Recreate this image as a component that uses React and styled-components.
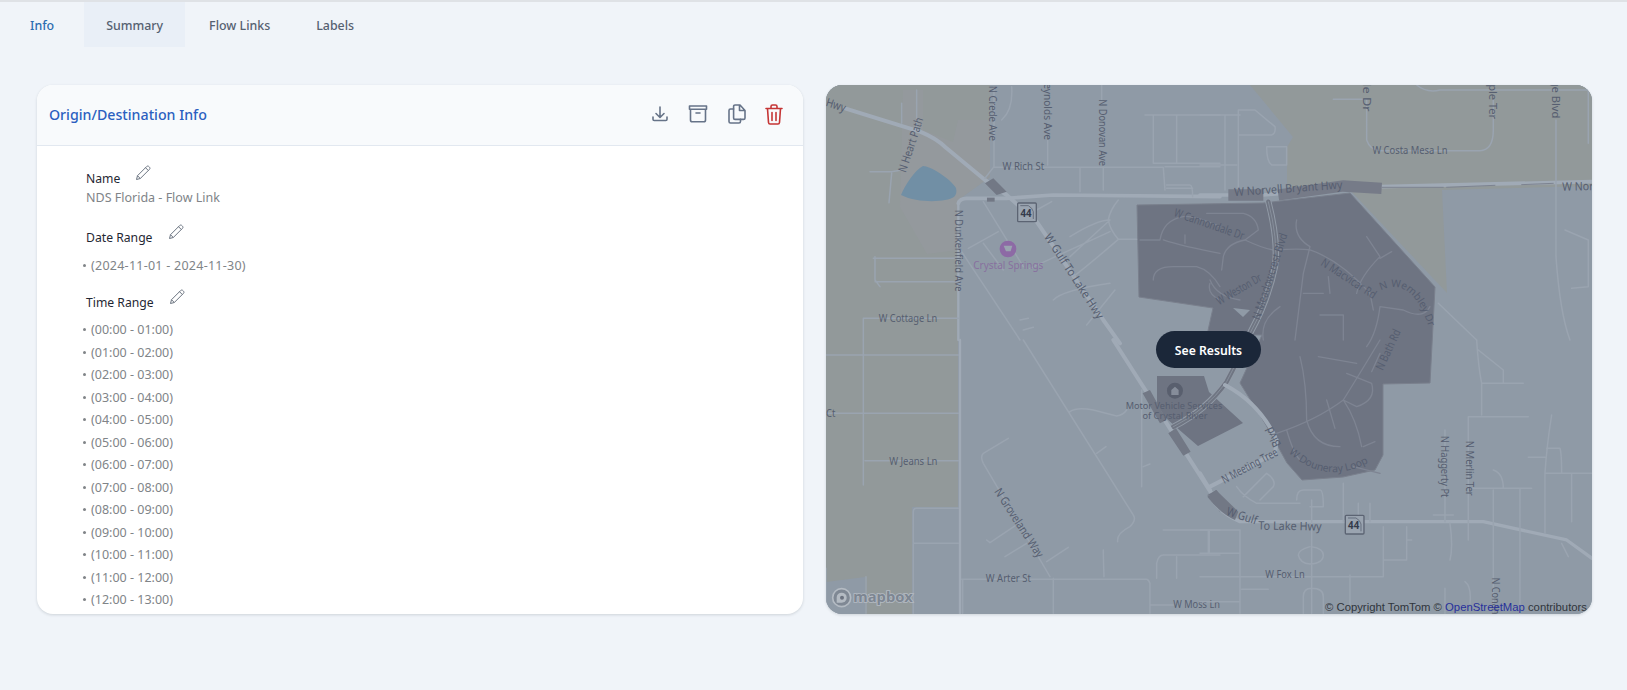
import React from 'react'
import styled, { createGlobalStyle } from 'styled-components'

const GlobalStyle = createGlobalStyle`
    html, body {
        margin: 0;
        height: 100%;
        background: #f0f4f9;
        font-family: "Noto Sans", "Open Sans", sans-serif;
    }
`

const Page = styled.div`
    min-height: 690px;
    border-top: 2px solid #dfe2e6;
    box-sizing: border-box;
`

const TabBar = styled.div`
    display: flex;
    height: 45px;
    padding-left: 8px;
    gap: 2px;
`

const Tab = styled.div`
    display: flex;
    align-items: center;
    padding: 2px 22px 0;
    font-size: 12.4px;
    font-weight: 500;
    color: ${props => props.$active ? '#2b6cb0' : '#566171'};
    background: ${props => props.$hover ? '#e9eff7' : 'transparent'};
    margin-right: ${props => props.$active ? '6px' : '0'};
`

const Columns = styled.div`
    display: grid;
    grid-template-columns: 766px 766px;
    gap: 23px;
    padding: 38px 0 0 37px;
`

const Card = styled.section`
    height: 529px;
    background: white;
    border-radius: 16px;
    box-shadow: 0 1px 3px rgba(30, 41, 59, 0.16);
    overflow: hidden;
`

const CardHeader = styled.header`
    display: flex;
    align-items: center;
    justify-content: space-between;
    height: 61px;
    box-sizing: border-box;
    padding: 0 20px 2px 12px;
    background: #f8fafc;
    border-bottom: 1px solid #e2e8f0;
`

const Title = styled.h2`
    margin: 0;
    font-size: 14.2px;
    font-weight: 500;
    color: #2b5fc0;
`

const Actions = styled.div`
    display: flex;
    align-items: center;
    gap: 19.4px;
`

const IconButton = styled.span`
    display: flex;
    color: ${props => props.$danger ? '#c53535' : '#667388'};
`

const CardBody = styled.div`
    padding: 18px 0 0 49px;
`

const Field = styled.div`
    margin-bottom: ${props => props.$gap || '0'};
`

const FieldLabel = styled.div`
    display: flex;
    align-items: flex-start;
    height: 24px;
    gap: 15px;
    font-size: 12.2px;
    line-height: 30px;
    color: #1f2733;
`

const PencilWrap = styled.span`
    display: flex;
    margin-top: 1px;
    color: #6b7480;
`

const FieldValue = styled.div`
    font-size: 12.5px;
    line-height: 20px;
    color: #808488;
`

const RangeList = styled.ul`
    list-style: none;
    margin: ${props => props.$top} 0 0 -3px;
    padding: 0;
`

const RangeItem = styled.li`
    display: flex;
    align-items: center;
    height: 22.5px;
    gap: 5px;
    font-size: 12.5px;
    letter-spacing: ${props => props.$wide ? '0.25px' : '0'};
    color: #808488;

    &::before {
        content: "";
        width: 3px;
        height: 3px;
        border-radius: 50%;
        background: #808488;
    }
`

const MapCard = styled(Card)`
    position: relative;
    background: #8f9aa6;
`

const MapSvg = styled.svg`
    display: block;
    width: 766px;
    height: 529px;
`

const ResultsButton = styled.button`
    position: absolute;
    left: 330px;
    top: 246px;
    width: 105px;
    height: 37px;
    padding: 2px 0 0;
    border: 0;
    border-radius: 19px;
    background: #1b2739;
    color: white;
    font: 600 12.2px "Noto Sans", sans-serif;
`

const Attribution = styled.div`
    position: absolute;
    right: 5px;
    bottom: 0;
    font: 11.3px/14px "Liberation Sans", Arial, sans-serif;
    color: #30353c;

    a {
        color: #27309b;
        text-decoration: none;
    }
`

const ROAD = '#a0aab6'
const ROAD_THIN = '#9aa4b0'
const ROAD_SITE = '#7e8492'
const LABEL = '#565e70'
const SITE = '#6e7482'

const hours = Array.from({ length: 13 }, (_, i) => {
    const p = n => String(n).padStart(2, '0')
    return `(${p(i)}:00 - ${p(i + 1)}:00)`
})

const DownloadIcon = () => (
    <svg width="18" height="18" viewBox="0 0 18 18" fill="none" stroke="currentColor" strokeWidth="1.6" strokeLinecap="round" strokeLinejoin="round">
        <path d="M9 2v10M5 8.5 9 12.5l4-4M2 12v2.2c0 .7.5 1.3 1.2 1.3h11.6c.7 0 1.2-.6 1.2-1.3V12" />
    </svg>
)

const ArchiveIcon = () => (
    <svg width="20" height="18" viewBox="0 0 20 18" fill="none" stroke="currentColor" strokeWidth="1.6" strokeLinecap="round" strokeLinejoin="round">
        <path d="M1.500 1h17v3.200h-17zM2.500 4.200V15c0 1 .7 1.800 1.700 1.800h11.600c1 0 1.700-.8 1.700-1.800V4.200M8 8h4" />
    </svg>
)

const CopyIcon = () => (
    <svg width="18" height="20" viewBox="0 0 18 20" fill="none" stroke="currentColor" strokeWidth="1.6" strokeLinecap="round" strokeLinejoin="round">
        <path d="M7 1h5l5 5.500V14c0 .8-.6 1.400-1.400 1.400H7c-.8 0-1.400-.6-1.400-1.400V2.400C5.600 1.600 6.200 1 7 1zM11.500 1v5.500H17" />
        <path d="M5.600 5H2.500C1.700 5 1 5.700 1 6.500v11C1 18.300 1.700 19 2.500 19H11c.8 0 1.500-.7 1.500-1.500v-2.100" />
    </svg>
)

const TrashIcon = () => (
    <svg width="18" height="21" viewBox="0 0 18 21" fill="none" stroke="currentColor" strokeWidth="1.6" strokeLinecap="round" strokeLinejoin="round">
        <path d="M1 4.500h16M6 4.500V2.500C6 1.700 6.600 1 7.500 1h3c.9 0 1.500.7 1.500 1.500v2M2.500 4.500l1 14c.1.9.7 1.500 1.500 1.500h8c.8 0 1.400-.6 1.500-1.500l1-14M7 8.500v8M11 8.500v8" />
    </svg>
)

const PencilIcon = () => (
    <svg width="16" height="16" viewBox="0 0 16 16" fill="none" stroke="currentColor" strokeWidth="1" strokeLinejoin="round">
        <path d="M1.500 14.500l1-3.800L11.700 1.500c.6-.6 1.500-.6 2.100 0l.7.700c.6.600.6 1.500 0 2.100L5.300 13.500zM2.500 10.700l2.800 2.800M10.500 2.700l2.800 2.800" />
    </svg>
)

const Label = ({ x, y, rot = 0, len, fill = LABEL, size = 35, children }) => (
    <text
        x={x}
        y={y}
        fontSize={size}
        fontFamily='"Noto Sans", sans-serif'
        fill={fill}
        textAnchor="middle"
        dominantBaseline="middle"
        textLength={len}
        lengthAdjust="spacingAndGlyphs"
        transform={`rotate(${rot} ${x} ${y})`}
    >
        {children}
    </text>
)

const CurvedLabel = ({ id, d, children }) => (
    <>
        <path id={id} d={d} fill="none" />
        <text fontSize="31" fontFamily='"Noto Sans", sans-serif' fill={LABEL}>
            <textPath href={`#${id}`} startOffset="50%" textAnchor="middle">{children}</textPath>
        </text>
    </>
)

// one group per crop of the map, road coordinates are 3x page pixels
const Layer = ({ x, y, children }) => (
    <g transform={`translate(${x} ${y}) scale(0.3333)`}>{children}</g>
)

const Roads = ({ d, width = 4.5, color }) => (
    <path d={d} fill="none" stroke={color || (width > 6 ? ROAD : ROAD_THIN)} strokeWidth={width} strokeLinecap="round" strokeLinejoin="round" />
)

const Shield = ({ x, y }) => (
    <g transform={`translate(${x} ${y})`}>
        <rect x="0" y="0" width="56" height="56" rx="3" fill="#9aa4b0" stroke="#5c6473" strokeWidth="4" />
        <path d="M8 8h24l10 8 5 10v22" fill="none" stroke="#5c6473" strokeWidth="2.500" />
        <text x="25" y="42" fontSize="29" fontWeight="700" textAnchor="middle" fontFamily='"Noto Sans", sans-serif' fill="#343b4b">44</text>
    </g>
)

const MapDrawing = () => (
    <MapSvg viewBox="826 85 766 529">
        <rect x="826" y="85" width="766" height="529" fill="#8f9aa6" />

        {/* land use */}
        <path fill="#92999a" d="M826 85H990V177L958 200V507H912V614H865V577L826 582Z" />
        <path fill="#94999d" d="M903 90H923V130L953 142L958 120H990V177L958 200V250L927 254L900 207Z" />
        <path fill="#92999a" d="M1250 85L1293 137L1287 147V187L1350 190L1447 293L1442 190L1592 186V85Z" />
        <path fill="#718fa5" d="M923 166C930 166 950 178 956 188C958 196 953 199 945 200C935 202 915 202 901 195C905 185 915 170 923 166Z" />

        {/* site outline */}
        <path fill={SITE} stroke="#7a808d" d="M1137 205L1263 203L1350 193L1435 287L1430 383L1383 384L1383 455L1375 470L1343 477L1302 480L1287 463L1266 425L1240 383L1262 335L1207 335L1213 308L1139 297Z" />
        <path fill={SITE} d="M1157 376H1204L1209 392L1243 423L1198 446L1176 427L1157 410Z" />
        <path fill="#8f9aa6" d="M1233 308L1250 310L1243 317Z" />

        <Layer x={820} y={80}>
            <Roads width={12} d="M75 85L300 155Q350 175 380 205L495 300L560 345L650 425L850 720L900 790" />
            <Roads width={11} d="M415 370Q420 355 440 355L560 355L700 345L1200 350" />
            <Roads d="M522 20V260L495 295M575 20Q580 90 545 120M683 180V255M845 15V60M850 260V330M520 262H1030L1035 330M780 262V335M1000 105V250M1070 105V250M975 105H1200M1000 250H1200M1035 260H1200M1040 315H1110Q1118 315 1118 350M1040 325H1118" />
            <Roads width={7} d="M415 365V780" />
            <Roads d="M160 535H415M165 530V600L180 620M165 605H415M130 780V715H415M290 30V150M245 70V130M150 275H215L245 270M215 280L207 368" />
            <Roads d="M490 365L610 560M415 500L600 780M445 505L535 455M490 490L550 570M630 565L870 455M750 530L870 420Q830 420 750 470M895 360Q870 390 865 420Q870 450 895 478L950 478M760 590Q800 560 895 478M700 660Q730 630 870 610M650 390L695 365M800 735L885 630M600 720L625 715M610 750L640 742" />
            <Roads color={ROAD_SITE} width={4} d="M960 480H1020Q1030 420 1090 410Q1120 405 1200 440M1030 480Q1090 500 1200 520M1095 465V490M1000 600Q1000 560 1060 560H1130Q1170 570 1200 620M1170 610Q1160 640 1200 660" />
            <path d="M495 310L520 295L560 335L530 345Z" fill="#727885" />
            <rect x="501" y="353" width="23" height="12" fill="#727885" />
            <Label x={47} y={78} rot={18} len={60}>Hwy</Label>
            <Label x={517} y={100} rot={90} len={165}>N Crede Ave</Label>
            <Label x={682} y={70} rot={90} len={220}>N Reynolds Ave</Label>
            <Label x={845} y={158} rot={90} len={200}>N Donovan Ave</Label>
            <Label x={275} y={195} rot={-72} len={170}>N Heart Path</Label>
            <Label x={610} y={262} len={125}>W Rich St</Label>
            <Label x={415} y={512} rot={90} len={245}>N Dunkenfield Ave</Label>
            <Label x={760} y={590} rot={57} len={297}>W Gulf To Lake Hwy</Label>
            <Label x={264} y={716} len={175}>W Cottage Ln</Label>
            <Label x={1167} y={435} rot={19} len={220}>W Cannondale Dr</Label>
            <circle cx="564" cy="507" r="25" fill="#8d6aa5" />
            <path d="M551 497H577L572 514H558Z" fill="#9aa4b0" />
            <Label x={565} y={558} len={210} fill="#88709f" size={31}>Crystal Springs</Label>
            <Shield x={593} y={369} />
        </Layer>

        <Layer x={1200} y={80}>
            <Roads width={11} d="M0 345H190L450 322L1176 305" />
            <path d="M85 345H190M235 345L430 318L545 325" fill="none" stroke="#767b88" strokeWidth="34" />
            <Roads width={3} color="#7c8390" d="M545 322H730M740 322L885 316M965 314L1060 310" />
            <Roads d="M500 60V180Q510 210 540 212H840Q880 210 880 150V60M400 58H500M650 15Q680 40 720 30H1170M1068 120V530Q1080 700 1110 780M1165 30V190M1095 450L1165 480M1165 480V620L1115 625M115 90H165L225 140Q228 160 215 165H115ZM200 200H260V255H215Q200 245 200 200M115 165V330M75 105V330M0 105H120M0 255H110M715 670L830 780" />
            <Roads color={ROAD_SITE} width={4} d="M20 400H130Q170 410 175 450L135 480Q80 490 70 530L65 570M135 480Q200 510 225 510Q300 505 330 510Q420 540 510 640L520 690M290 420Q280 470 330 500L310 580L285 780M500 470L540 530Q480 590 470 640M575 515L540 535M385 590L390 640M690 680Q670 720 610 690L540 680M540 680Q530 760 500 800M310 640L370 640M240 680Q180 720 190 780M360 705H430V780M30 600Q50 650 120 660" />
            <Roads width={19} color="#929ba7" d="M205 365Q235 480 225 560Q205 660 150 760Q115 840 80 905Q20 990 -81 1041" />
            <Roads width={13} color="#6f7582" d="M205 365Q235 480 225 560Q205 660 150 760Q115 840 80 905Q20 990 -81 1041" />
            <Roads width={2} color="#929ba7" d="M205 365Q235 480 225 560Q205 660 150 760Q115 840 80 905Q20 990 -81 1041" />
            <Label x={498} y={-5} rot={90} len={200}>N Crede Dr</Label>
            <Label x={875} y={15} rot={90} len={205}>N Temple Ter</Label>
            <Label x={1065} y={15} rot={90} len={200}>N Ridge Blvd</Label>
            <Label x={630} y={213} len={225}>W Costa Mesa Ln</Label>
            <Label x={265} y={328} rot={-4} len={325}>W Norvell Bryant Hwy</Label>
            <Label x={1249} y={320} rot={-1} len={325}>W Norvell Bryant Hwy</Label>
            <Label x={212} y={590} rot={-72} len={270}>N Meadowcrest Blvd</Label>
            <Label x={118} y={630} rot={-30} len={150}>W Weston Dr</Label>
            <Label x={445} y={598} rot={33} len={190}>N Macvicar Rd</Label>
            <CurvedLabel id="wembley" d="M500 660Q640 540 700 790">N Wembley Dr</CurvedLabel>
        </Layer>

        <Layer x={820} y={340}>
            <Roads d="M130 0V435M18 45H415M18 220H415M135 362H415M280 820V515Q280 505 290 505H415M280 610H415M425 718H980Q985 718 990 730V820M428 720V820M700 715V820M610 0L940 525Q950 540 930 560Q890 580 893 605M565 295L490 340Q480 350 490 370L690 710M500 600L510 608L585 558M555 650L620 610M680 665L745 622M850 630Q850 650 852 710M1010 715V670Q1015 645 1030 645H1200M1070 650V715M990 795H1060M1030 570H1200M1168 570V640M750 215Q770 200 820 210L890 228Q910 225 920 210M965 150V440M970 380L990 372M830 340L858 320M138 710V820M18 685V820" />
            <Roads width={7} d="M420 0V820" />
            <Roads width={12} d="M880 0L1200 500" />
            <path d="M968 160L990 150L1040 240L1020 250ZM1045 280L1068 265L1112 335L1090 347ZM1162 465L1190 450L1220 500L1200 515Z" fill="#727885" />
            <Label x={32} y={222} len={28}>Ct</Label>
            <Label x={280} y={366} len={145}>W Jeans Ln</Label>
            <Label x={595} y={550} rot={57} len={240}>N Groveland Way</Label>
            <Label x={565} y={718} len={135}>W Arter St</Label>
            <Label x={1130} y={795} len={140}>W Moss Ln</Label>
            <circle cx="1065" cy="152" r="24" fill="#595f6e" />
            <path d="M1054 165V150L1065 140L1076 150V165Z" fill="#868d9a" />
            <Label x={1062} y={198} len={290} size={29}>Motor Vehicle Services</Label>
            <Label x={1065} y={229} len={195} size={29}>of Crystal River</Label>
            {/* mapbox mark */}
            <circle cx="65" cy="773" r="27" fill="#7f8894" stroke="#b4bbc3" strokeWidth="5" />
            <path d="M50 773a15 15 0 1 1 15 15h-15z" fill="#b4bbc3" />
            <circle cx="66" cy="773" r="6" fill="#6c7380" />
            <text x="100" y="787" fontSize="40" fontWeight="700" fontFamily='"Noto Sans", sans-serif' fill="#7d8692" stroke="#b4bbc3" strokeWidth="5" paintOrder="stroke" textLength="178" lengthAdjust="spacingAndGlyphs">mapbox</text>
        </Layer>

        <Layer x={1200} y={340}>
            <Roads width={10} d="M30 470Q60 520 120 545H490L850 545L1100 600L1176 655" />
            <path d="M22 470L48 450L115 515L105 540Q60 520 22 470Z" fill="#727885" />
            <Roads d="M0 570H120V820M25 570V640M0 640H120M0 710H550V560M0 785H120M125 748H205M550 660H620V560M620 600H635M335 480V820M290 480Q290 450 310 450H360Q370 450 370 500H330M330 620Q295 630 295 645Q300 670 330 672Q370 670 370 645Q370 625 335 620M310 820V770Q310 745 335 745Q370 745 370 770V820M450 705V820M430 430V545M475 490V545M510 490V545M735 270V545M700 525H760M750 550Q760 620 750 660M805 230H985M805 230V600M830 0Q835 80 845 130V225M845 130H970M835 30L910 90V130M880 390Q910 400 910 445M810 445H995M880 450V820M960 445V820M1035 400H1176M1035 400V580M985 352H1035M1035 400Q1040 320 1055 225M1040 325H1080Q1085 340 1085 400M1115 400V545M110 440Q130 470 170 490H300M130 470L200 400Q230 420 220 440L180 480M795 725Q815 740 810 790M735 745V820M1085 610L1105 650" />
            <Roads width={12} d="M75 135Q180 190 230 300L225 340L30 440M0 400L30 450" />
            <Roads color={ROAD_SITE} width={4} d="M230 280Q350 240 430 180Q480 100 540 0M430 180L470 200Q530 180 515 130L440 100M430 180Q470 240 485 320M260 270Q280 340 300 360M320 240Q340 320 420 320M300 50Q320 130 320 240M380 180L405 265M515 95L540 40M355 50L470 70M490 320L525 305M460 380L540 400" />
            <Label x={732} y={380} rot={90} len={185}>N Haggerty Pt</Label>
            <Label x={806} y={385} rot={90} len={165}>N Merlin Ter</Label>
            <Label x={885} y={800} rot={90} len={175}>N Conant Ave</Label>
            <Label x={255} y={705} len={118}>W Fox Ln</Label>
            <Label x={125} y={530} rot={18} len={95}>W Gulf</Label>
            <Label x={270} y={561} rot={1} len={190}>To Lake Hwy</Label>
            <Label x={150} y={380} rot={-28} len={185}>N Meeting Tree</Label>
            <Label x={222} y={290} rot={-115} len={62}>Blvd</Label>
            <Label x={567} y={30} rot={-65} len={130}>N Bath Rd</Label>
            <CurvedLabel id="douneray" d="M230 300Q370 470 550 340">W Douneray Loop</CurvedLabel>
            <Shield x={436} y={526} />
        </Layer>
    </MapSvg>
)

const App = () => (
    <Page>
        <GlobalStyle />
        <TabBar>
            <Tab $active>Info</Tab>
            <Tab $hover>Summary</Tab>
            <Tab>Flow Links</Tab>
            <Tab>Labels</Tab>
        </TabBar>
        <Columns>
            <Card>
                <CardHeader>
                    <Title>Origin/Destination Info</Title>
                    <Actions>
                        <IconButton><DownloadIcon /></IconButton>
                        <IconButton><ArchiveIcon /></IconButton>
                        <IconButton><CopyIcon /></IconButton>
                        <IconButton $danger><TrashIcon /></IconButton>
                    </Actions>
                </CardHeader>
                <CardBody>
                    <Field $gap="15px">
                        <FieldLabel>Name <PencilWrap><PencilIcon /></PencilWrap></FieldLabel>
                        <FieldValue>NDS Florida - Flow Link</FieldValue>
                    </Field>
                    <Field $gap="11px">
                        <FieldLabel>Date Range <PencilWrap><PencilIcon /></PencilWrap></FieldLabel>
                        <RangeList $top="7px">
                            <RangeItem $wide>(2024-11-01 - 2024-11-30)</RangeItem>
                        </RangeList>
                    </Field>
                    <Field>
                        <FieldLabel>Time Range <PencilWrap><PencilIcon /></PencilWrap></FieldLabel>
                        <RangeList $top="7px">
                            {hours.map(h => <RangeItem key={h}>{h}</RangeItem>)}
                        </RangeList>
                    </Field>
                </CardBody>
            </Card>
            <MapCard as="div">
                <MapDrawing />
                <ResultsButton>See Results</ResultsButton>
                <Attribution>© Copyright TomTom © <a href="#osm">OpenStreetMap</a> contributors</Attribution>
            </MapCard>
        </Columns>
    </Page>
)

export default App
